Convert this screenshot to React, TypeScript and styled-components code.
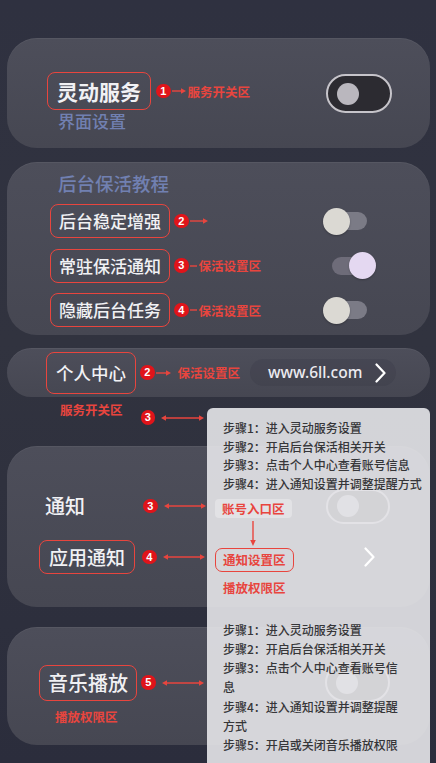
import React from "react";
import styled, { createGlobalStyle } from "styled-components";

const RED = "#e8453e";
const BADGE = "#e0141a";

const GlobalStyle = createGlobalStyle`
  html, body {
    margin: 0;
    padding: 0;
    background: #2d2f3d;
  }
  body {
    font-family: "Noto Sans CJK SC", "Noto Sans", sans-serif;
  }
`;

type ArrowKind = "right" | "both" | "dash";

const Arrow = ({ w, kind, ml = 0 }: { w: number; kind: ArrowKind; ml?: number }) => (
  <ArrowSvg width={w} height={8} viewBox={`0 0 ${w} 8`} $ml={ml}>
    <line x1={kind === "both" ? 2 : 0} y1={4} x2={kind === "dash" ? w : w - 2} y2={4} stroke={RED} strokeWidth={1.4} />
    {kind !== "dash" && <path d={`M${w - 5} 1.3 L${w} 4 L${w - 5} 6.7 Z`} fill={RED} />}
    {kind === "both" && <path d="M5 1.3 L0 4 L5 6.7 Z" fill={RED} />}
  </ArrowSvg>
);

const DownArrow = () => (
  <DownSvg width={10} height={25} viewBox="0 0 10 25">
    <line x1={5} y1={0} x2={5} y2={20} stroke={RED} strokeWidth={1.4} />
    <path d="M2.2 19 L5 25 L7.8 19 Z" fill={RED} />
  </DownSvg>
);

const Chevron = () => (
  <ChevronSvg width={11} height={20} viewBox="0 0 11 20">
    <polyline
      points="1.5,1.5 9.5,10 1.5,18.5"
      fill="none"
      stroke="#ffffff"
      strokeWidth={2.2}
      strokeLinecap="round"
      strokeLinejoin="round"
    />
  </ChevronSvg>
);

const stepsShort = [
  "步骤1：进入灵动服务设置",
  "步骤2：开启后台保活相关开关",
  "步骤3：点击个人中心查看账号信息",
  "步骤4：进入通知设置并调整提醒方式",
];

const stepsLong = [...stepsShort, "步骤5：开启或关闭音乐播放权限"];

const App = () => {
  return (
    <>
      <GlobalStyle />
      <Page>
        <Card $h={110} $pad="34px 38px 0 40px">
          <Between $align="flex-start">
            <div>
              <Line>
                <TagBox $size={21} $lh={25} $py={5.5} $px={9} $weight={700}>
                  灵动服务
                </TagBox>
                <Dot $ml={5}>1</Dot>
                <Arrow w={14} kind="right" ml={1} />
                <Note $ml={2}>服务开关区</Note>
              </Line>
              <SectionTitle $size={17} $lh={20} $ml={11} $mt={1}>
                界面设置
              </SectionTitle>
            </div>
            <OutlineToggle $w={66} $h={39} $mt={2} />
          </Between>
        </Card>

        <Card $mt={14} $h={173} $pad="10px 54px 0 43px">
          <SectionTitle $size={18.5} $lh={22} $ml={8}>
            后台保活教程
          </SectionTitle>
          <RowList>
            <Between>
              <Line>
                <TagBox $size={17} $lh={24} $py={4} $px={8}>
                  后台稳定增强
                </TagBox>
                <Dot $ml={4}>2</Dot>
                <Arrow w={18} kind="right" ml={1} />
              </Line>
              <MiniSwitch />
            </Between>
            <Between>
              <Line>
                <TagBox $size={17} $lh={24} $py={4} $px={8}>
                  常驻保活通知
                </TagBox>
                <Dot $ml={4}>3</Dot>
                <Arrow w={7} kind="dash" ml={1} />
                <Note $ml={2}>保活设置区</Note>
              </Line>
              <MiniSwitch $on />
            </Between>
            <Between>
              <Line>
                <TagBox $size={17} $lh={24} $py={4} $px={8}>
                  隐藏后台任务
                </TagBox>
                <Dot $ml={4}>4</Dot>
                <Arrow w={7} kind="dash" ml={1} />
                <Note $ml={2}>保活设置区</Note>
              </Line>
              <MiniSwitch />
            </Between>
          </RowList>
        </Card>

        <PillCard $mt={13} $h={49} $pad="0 0 0 39px" $radius={25}>
          <TagBox $size={17.5} $lh={24} $py={8} $px={9}>
            个人中心
          </TagBox>
          <Dot $ml={4}>2</Dot>
          <Arrow w={15} kind="right" ml={1} />
          <Note $ml={7}>保活设置区</Note>
          <UrlPill>
            <UrlText>www.6ll.com</UrlText>
            <Chevron />
          </UrlPill>
        </PillCard>

        <HintRow>
          <Note $ml={53}>服务开关区</Note>
          <Dot $ml={18} $mt={8}>3</Dot>
          <Arrow w={43} kind="both" ml={6} />
        </HintRow>

        <Card $mt={18} $h={161} $pad="42px 40px 0 32px">
          <Between>
            <Line>
              <Label>通知</Label>
              <Dot $ml={7}>3</Dot>
              <Arrow w={42} kind="both" ml={6} />
            </Line>
            <OutlineToggle $w={64} $h={35} />
          </Between>
          <Between $mt={16}>
            <Line>
              <TagBox $size={19} $lh={24} $py={4} $px={9}>
                应用通知
              </TagBox>
              <Dot $ml={7}>4</Dot>
              <Arrow w={42} kind="both" ml={6} />
            </Line>
            <ChevronSlot>
              <Chevron />
            </ChevronSlot>
          </Between>
        </Card>

        <Card $mt={20} $h={118} $pad="36px 40px 0 32px">
          <Between>
            <Line>
              <TagBox $size={20} $lh={26} $py={4} $px={8}>
                音乐播放
              </TagBox>
              <Dot $ml={4}>5</Dot>
              <Arrow w={42} kind="both" ml={6} />
            </Line>
            <OutlineToggle $w={65} $h={39} />
          </Between>
          <NoteBlock $ml={16} $mt={7}>
            播放权限区
          </NoteBlock>
        </Card>

        <Panel>
          <PanelSection $h={199} $pt={11}>
            <Steps $w={207} $lh={18.5}>
              {stepsShort.map((s) => (
                <div key={s}>{s}</div>
              ))}
            </Steps>
            <SoftTag>账号入口区</SoftTag>
            <DownArrow />
            <RedTag>通知设置区</RedTag>
            <NoteBlock $ml={0} $mt={8}>
              播放权限区
            </NoteBlock>
          </PanelSection>
          <PanelSection $h={160} $pt={12.5}>
            <Steps $w={185} $lh={19.3}>
              {stepsLong.map((s) => (
                <div key={s}>{s}</div>
              ))}
            </Steps>
          </PanelSection>
        </Panel>
      </Page>
    </>
  );
};

export default App;

const Page = styled.main`
  position: relative;
  width: 436px;
  height: 763px;
  overflow: hidden;
  box-sizing: border-box;
  padding: 38px 6px 0 7px;
  background: linear-gradient(180deg, #2f3140 0%, #31333f 45%, #2b2d3c 100%);
`;

const Card = styled.section<{ $mt?: number; $h: number; $pad: string; $radius?: number }>`
  box-sizing: border-box;
  margin-top: ${(p) => p.$mt ?? 0}px;
  height: ${(p) => p.$h}px;
  padding: ${(p) => p.$pad};
  border-radius: ${(p) => p.$radius ?? 30}px;
  background: linear-gradient(180deg, #4d4e5a 0%, #464752 100%);
  box-shadow: inset 0 1px 0 rgba(255, 255, 255, 0.05);
`;

const PillCard = styled(Card)`
  display: flex;
  align-items: center;
`;

const Between = styled.div<{ $align?: string; $mt?: number }>`
  display: flex;
  justify-content: space-between;
  align-items: ${(p) => p.$align ?? "center"};
  margin-top: ${(p) => p.$mt ?? 0}px;
`;

const Line = styled.div`
  display: flex;
  align-items: center;
`;

const RowList = styled.div`
  display: flex;
  flex-direction: column;
  gap: 10.5px;
  margin-top: 10px;
`;

const TagBox = styled.span<{ $size: number; $lh: number; $py: number; $px: number; $weight?: number }>`
  flex: none;
  display: inline-block;
  border: 1.5px solid ${RED};
  border-radius: 8px;
  padding: ${(p) => p.$py}px ${(p) => p.$px}px;
  font-size: ${(p) => p.$size}px;
  line-height: ${(p) => p.$lh}px;
  font-weight: ${(p) => p.$weight ?? 500};
  color: #f1f1f4;
  white-space: nowrap;
`;

const Label = styled.span`
  flex: none;
  box-sizing: border-box;
  width: 97px;
  padding-left: 6px;
  font-size: 20px;
  line-height: 36px;
  font-weight: 500;
  color: #f1f1f4;
`;

const SectionTitle = styled.div<{ $size: number; $lh: number; $ml: number; $mt?: number }>`
  margin: ${(p) => p.$mt ?? 0}px 0 0 ${(p) => p.$ml}px;
  font-size: ${(p) => p.$size}px;
  line-height: ${(p) => p.$lh}px;
  font-weight: 500;
  color: #7180b1;
`;

const Note = styled.span<{ $ml?: number; $mt?: number }>`
  flex: none;
  margin-left: ${(p) => p.$ml ?? 0}px;
  margin-top: ${(p) => p.$mt ?? 0}px;
  color: ${RED};
  font-size: 12.5px;
  line-height: 15px;
  font-weight: 600;
  white-space: nowrap;
`;

const NoteBlock = styled(Note)`
  display: block;
`;

const Dot = styled.span<{ $ml?: number; $mt?: number }>`
  flex: none;
  align-self: ${(p) => (p.$mt ? "flex-start" : "center")};
  width: 14.5px;
  height: 14.5px;
  margin-left: ${(p) => p.$ml ?? 0}px;
  margin-top: ${(p) => p.$mt ?? 0}px;
  border-radius: 50%;
  background: ${BADGE};
  color: #ffffff;
  font: 700 11px/14.5px "Liberation Sans", Arial, sans-serif;
  text-align: center;
`;

const ArrowSvg = styled.svg<{ $ml: number }>`
  flex: none;
  display: block;
  margin-left: ${(p) => p.$ml}px;
`;

const HintRow = styled.div`
  display: flex;
  align-items: flex-start;
  height: 26px;
  margin-top: 5px;

  & > svg {
    margin-top: 11.5px;
  }
`;

const OutlineToggle = styled.span<{ $w: number; $h: number; $mt?: number }>`
  flex: none;
  box-sizing: border-box;
  display: flex;
  align-items: center;
  width: ${(p) => p.$w}px;
  height: ${(p) => p.$h}px;
  margin-top: ${(p) => p.$mt ?? 0}px;
  padding-left: 8.5px;
  border: 2.5px solid #c6c4ca;
  border-radius: 999px;
  background: #2c2b31;

  &::after {
    content: "";
    width: 22px;
    height: 22px;
    border-radius: 50%;
    background: #bab7be;
  }
`;

const MiniSwitch = styled.span<{ $on?: boolean }>`
  position: relative;
  flex: none;
  width: 53px;
  height: 27px;

  &::before {
    content: "";
    position: absolute;
    top: 4.5px;
    left: ${(p) => (p.$on ? 9 : 3)}px;
    width: ${(p) => (p.$on ? 40 : 41)}px;
    height: 18px;
    border-radius: 9px;
    background: ${(p) => (p.$on ? "#6e6c79" : "#7b7b86")};
  }

  &::after {
    content: "";
    position: absolute;
    top: 0;
    left: ${(p) => (p.$on ? 26 : 0)}px;
    width: 27px;
    height: 27px;
    border-radius: 50%;
    background: ${(p) => (p.$on ? "#e4d8f1" : "#dbd9d3")};
    box-shadow: 0 1px 2px rgba(0, 0, 0, 0.25);
  }
`;

const UrlPill = styled.div`
  display: flex;
  align-items: center;
  gap: 13px;
  height: 27px;
  margin-left: 10px;
  padding: 0 10px 0 18px;
  border-radius: 14px;
  background: rgba(36, 36, 48, 0.12);
`;

const UrlText = styled.span`
  font-family: "Noto Sans", "Open Sans", sans-serif;
  font-size: 15.5px;
  line-height: 27px;
  font-weight: 500;
  color: #ecebf0;
`;

const ChevronSvg = styled.svg`
  flex: none;
  display: block;
`;

const ChevronSlot = styled.span`
  position: relative;
  z-index: 2;
  margin-right: 15px;
`;

const Panel = styled.aside`
  position: absolute;
  left: 207px;
  top: 408px;
  z-index: 1;
  width: 223px;
  border-radius: 6px 6px 0 0;
  background: rgba(229, 229, 233, 0.9);
  color: #363639;
`;

const PanelSection = styled.div<{ $h: number; $pt: number }>`
  box-sizing: border-box;
  height: ${(p) => p.$h}px;
  padding: ${(p) => p.$pt}px 0 0 16px;
`;

const Steps = styled.div<{ $w: number; $lh: number }>`
  width: ${(p) => p.$w}px;
  font-size: 12px;
  line-height: ${(p) => p.$lh}px;
  font-weight: 500;
`;

const SoftTag = styled.span`
  display: inline-block;
  margin: 6px 0 0 -8px;
  padding: 2px 7px;
  border-radius: 4px;
  background: rgba(255, 255, 255, 0.3);
  color: ${RED};
  font-size: 12.5px;
  line-height: 15px;
  font-weight: 600;
`;

const DownSvg = styled.svg`
  display: block;
  margin: 2px 0 0 25px;
`;

const RedTag = styled.span`
  display: inline-block;
  margin-left: -8px;
  padding: 2px 7px;
  border: 1.5px solid ${RED};
  border-radius: 7px;
  color: ${RED};
  font-size: 12.5px;
  line-height: 18px;
  font-weight: 600;
`;
